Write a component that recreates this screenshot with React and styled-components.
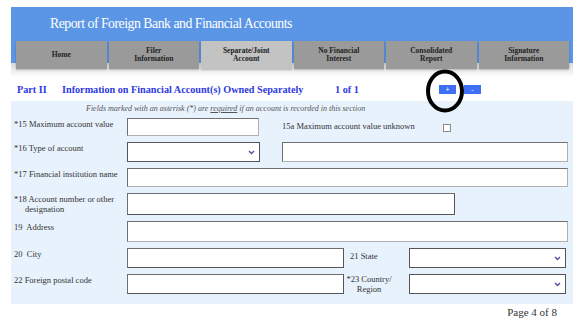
import styled, { createGlobalStyle } from 'styled-components';

const serif = `'Liberation Serif', 'Times New Roman', 'DejaVu Serif', serif`;

const GlobalStyle = createGlobalStyle`
    html, body {
        margin: 0;
        padding: 0;
        background: #ffffff;
        font-family: ${serif};
    }
`;

const Page = styled.div`
    width: 562px;
    margin: 7px 0 0 11px;
    font-family: ${serif};
`;

const Header = styled.div`
    height: 70px;
    background: linear-gradient(
        to bottom,
        #5b96e6 0,
        #5b96e6 56px,
        #d9d9d9 56px,
        #ffffff 70px
    );
`;

const Title = styled.div`
    padding: 8px 0 0 39px;
    height: 26px;
    font-family: ${serif};
    font-size: 13.8px;
    letter-spacing: -0.5px;
    color: #ffffff;
    line-height: 18px;
`;

const Tabs = styled.div`
    display: flex;
    gap: 2px;
    padding: 0 4px 0 5px;
    height: 28px;
`;

const Tab = styled.div`
    flex: 1;
    display: flex;
    align-items: center;
    justify-content: center;
    text-align: center;
    background: ${(p) => (p.$active ? '#c3c3c3' : '#9a9a9a')};
    box-shadow: 0 1px 2px rgba(0, 0, 0, 0.25);
    font-family: ${serif};
    font-size: 7.5px;
    font-weight: bold;
    line-height: 8px;
    color: #222;
`;

const PartRow = styled.div`
    position: relative;
    display: flex;
    align-items: center;
    height: 24px;
    padding-left: 6px;
    color: #2f39e0;
    font-family: ${serif};
    font-weight: bold;
    font-size: 10.2px;
`;

const PartNo = styled.span`
    width: 45px;
`;

const PartTitle = styled.span`
    width: 273px;
`;

const Count = styled.span`
    width: 104px;
`;

const SmallButton = styled.button`
    width: 17px;
    height: 9px;
    margin-right: ${(p) => p.$gap || 0}px;
    padding: 0;
    border: none;
    background: #3f6ff5;
    color: #ffffff;
    font-size: 7px;
    line-height: 9px;
    font-family: 'Liberation Sans', Arial, sans-serif;
`;

const Marker = styled.svg`
    position: absolute;
    left: 412px;
    top: -9px;
`;

const Panel = styled.div`
    background: #e8f2fd;
    padding: 2px 0 10px 3px;
`;

const Notice = styled.div`
    padding-left: 72px;
    font-style: italic;
    font-size: 8px;
    line-height: 11px;
    color: #555;
    margin-bottom: 4px;

    u {
        text-decoration: underline;
    }
`;

const Rows = styled.div`
    display: flex;
    flex-direction: column;
    gap: 6px;
`;

const Row = styled.div`
    display: flex;
    align-items: flex-start;
    height: ${(p) => p.$h}px;
`;

const Label = styled.div`
    width: 102px;
    padding: 2px 0 0 11px;
    text-indent: -11px;
    font-size: 8.5px;
    line-height: 9.5px;
    color: #333;
`;

const Field = styled.div`
    box-sizing: border-box;
    flex: none;
    width: ${(p) => p.$w}px;
    height: 100%;
    margin-left: ${(p) => p.$ml || 0}px;
    margin-right: ${(p) => p.$mr || 0}px;
    background: #ffffff;
    border: 1px solid #8a8a8a;
    border-top-color: #6f6f6f;
    border-left-color: #6f6f6f;
    border-right-color: ${(p) => (p.$dark ? '#555' : '#b0b0b0')};
    border-bottom-color: ${(p) => (p.$dark ? '#555' : '#b0b0b0')};
`;

const Select = styled(Field)`
    display: flex;
    align-items: center;
    justify-content: flex-end;
    padding-right: 4px;
    border-color: #555;
`;

const SideLabel = styled.div`
    flex: none;
    width: ${(p) => p.$w}px;
    padding-top: ${(p) => (p.$center ? 1 : 4)}px;
    font-size: 8.5px;
    line-height: 9.5px;
    color: #333;
    text-align: ${(p) => (p.$center ? 'center' : 'left')};
`;

const Check = styled.div`
    box-sizing: border-box;
    width: 8px;
    height: 8px;
    margin-top: 6px;
    background: #ffffff;
    border: 1px solid #8a8a8a;
`;

const Footer = styled.div`
    text-align: right;
    padding: 2px 16px 0 0;
    font-size: 11px;
    color: #333;
`;

const tabs = [
    ['Home'],
    ['Filer', 'Information'],
    ['Separate/Joint', 'Account'],
    ['No Financial', 'Interest'],
    ['Consolidated', 'Report'],
    ['Signature', 'Information'],
];

function Chevron() {
    return (
        <svg width="7" height="5" viewBox="0 0 7 5">
            <path d="M1 1 L3.5 3.5 L6 1" fill="none" stroke="#4a4fa0" strokeWidth="1.4" />
        </svg>
    );
}

export default function App() {
    return (
        <>
            <GlobalStyle />
            <Page>
                <Header>
                    <Title>Report of Foreign Bank and Financial Accounts</Title>
                    <Tabs>
                        {tabs.map((lines, i) => (
                            <Tab key={lines[0]} $active={i === 2}>
                                <div>
                                    {lines.map((l) => (
                                        <div key={l}>{l}</div>
                                    ))}
                                </div>
                            </Tab>
                        ))}
                    </Tabs>
                </Header>

                <PartRow>
                    <PartNo>Part II</PartNo>
                    <PartTitle>Information on Financial Account(s) Owned Separately</PartTitle>
                    <Count>1 of 1</Count>
                    <SmallButton $gap={8}>+</SmallButton>
                    <SmallButton>-</SmallButton>
                    {/* annotation ring around the add button */}
                    <Marker width="44" height="46" viewBox="0 0 44 46">
                        <ellipse cx="22" cy="23" rx="17" ry="19.5" fill="none" stroke="#000" strokeWidth="4" />
                    </Marker>
                </PartRow>

                <Panel>
                    <Notice>
                        Fields marked with an asterisk (*) are <u>required</u> if an account is recorded in this section
                    </Notice>
                    <Rows>
                        <Row $h={18}>
                            <Label>*15 Maximum account value</Label>
                            <Field $w={132} $mr={23} />
                            <SideLabel $w={161}>15a Maximum account value unknown</SideLabel>
                            <Check />
                        </Row>
                        <Row $h={20}>
                            <Label>*16 Type of account</Label>
                            <Select $w={133} $mr={22}>
                                <Chevron />
                            </Select>
                            <Field $w={286} />
                        </Row>
                        <Row $h={19}>
                            <Label>*17 Financial institution name</Label>
                            <Field $w={441} />
                        </Row>
                        <Row $h={22}>
                            <Label>*18 Account number or other designation</Label>
                            <Field $w={328} $dark />
                        </Row>
                        <Row $h={21}>
                            <Label>19&nbsp; Address</Label>
                            <Field $w={441} />
                        </Row>
                        <Row $h={20}>
                            <Label>20&nbsp; City</Label>
                            <Field $w={217} $mr={6} $dark />
                            <SideLabel $w={59}>21 State</SideLabel>
                            <Select $w={157}>
                                <Chevron />
                            </Select>
                        </Row>
                        <Row $h={20}>
                            <Label>22 Foreign postal code</Label>
                            <Field $w={217} $mr={2} $dark />
                            <SideLabel $w={46} $center>
                                *23 Country/
                                <br />
                                Region
                            </SideLabel>
                            <Select $w={157} $ml={17}>
                                <Chevron />
                            </Select>
                        </Row>
                    </Rows>
                </Panel>
                <Footer>Page 4 of 8</Footer>
            </Page>
        </>
    );
}
